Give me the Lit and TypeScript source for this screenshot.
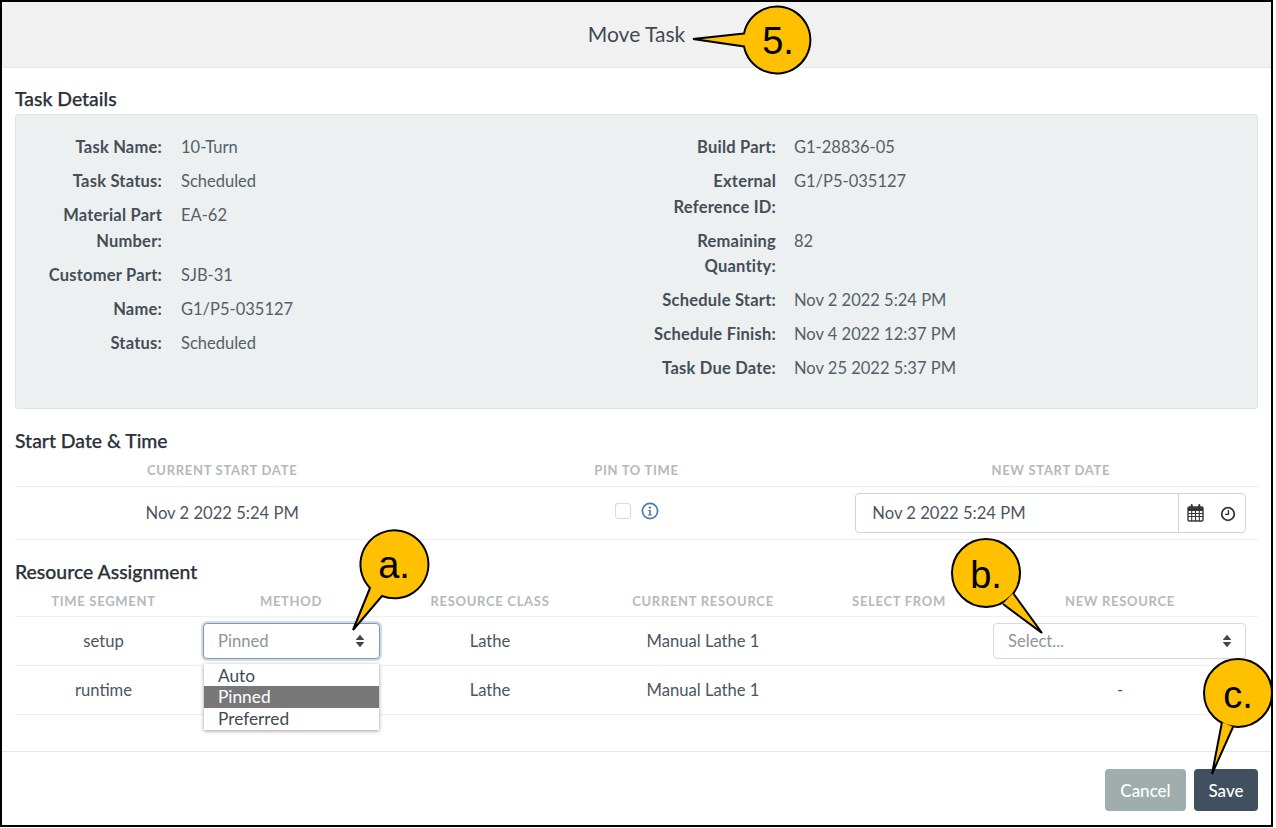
import { LitElement, html, css, svg } from "lit";
import { customElement } from "lit/decorators.js";

const leftRows: [string, string][] = [
  ["Task Name:", "10-Turn"],
  ["Task Status:", "Scheduled"],
  ["Material Part Number:", "EA-62"],
  ["Customer Part:", "SJB-31"],
  ["Name:", "G1/P5-035127"],
  ["Status:", "Scheduled"],
];
const rightRows: [string, string][] = [
  ["Build Part:", "G1-28836-05"],
  ["External Reference ID:", "G1/P5-035127"],
  ["Remaining Quantity:", "82"],
  ["Schedule Start:", "Nov 2 2022 5:24 PM"],
  ["Schedule Finish:", "Nov 4 2022 12:37 PM"],
  ["Task Due Date:", "Nov 25 2022 5:37 PM"],
];

const sortIcon = html`<svg class="sort" width="10" height="14" viewBox="0 0 10 14"><path d="M5 .8 9 5.4Q9.3 6 8.6 6H1.4Q.7 6 1 5.4ZM1.4 8H8.6Q9.3 8 9 8.6L5 13.2 1 8.6Q.7 8 1.4 8Z" fill="#3c4a57"/></svg>`;

const callouts = [
  { d: "M744 33.5 693 39 744 46.5A33.5 33.5 0 1 0 744 33.5Z", x: 778, y: 54, t: "5." },
  { d: "M370 588 353 630 382 596A34 34 0 1 0 370 588Z", x: 394, y: 578, t: "a." },
  { d: "M1013 593 1042 633 1003 604", x: 986, y: 588, t: "b.", circle: [986, 573, 34] },
  { d: "M1222 722 1212 774 1233 727", x: 1238, y: 708, t: "c.", circle: [1238, 693, 34] },
];

@customElement("app-root")
export class AppRoot extends LitElement {
  static styles = css`
    :host { display: block; width: 1276px; height: 828px; background: #fff; position: relative; overflow: hidden;
      font-family: Lato, "Open Sans", sans-serif; font-size: 16.6px; color: #4b5661; }
    .frame { width: 1273px; height: 827px; box-sizing: border-box; border: 2px solid #000; display: flex; flex-direction: column; }
    .head { height: 66px; flex: none; box-sizing: border-box; background: #f1f1f1; border-bottom: 1px solid #e3e5e6;
      display: flex; align-items: center; justify-content: center; font-size: 21px; color: #3f4a54; padding-bottom: 3px; }
    .body { flex: 1; padding: 0 13px; display: flex; flex-direction: column; }
    h3 { margin: 0; font-size: 19.4px; font-weight: 500; line-height: 24px; color: #2a3138; -webkit-text-stroke: .25px #2a3138; }
    .h1 { margin-top: 19px; }
    .h2 { margin-top: 20px; }
    .h3 { margin-top: 20px; }
    .panel { margin-top: 3px; height: 295px; box-sizing: border-box; background: #ecf0f1; border: 1px solid #dfe4e6; border-radius: 3px;
      padding: 20px 0 0; display: grid; grid-template-columns: 614px 1fr; }
    .col { display: flex; flex-direction: column; gap: 8.4px; }
    .col.r { padding-left: 16px; }
    .kv { display: grid; grid-template-columns: 146px 1fr; column-gap: 19px; line-height: 25.6px; font-size: 16.5px; }
    .r .kv { grid-template-columns: 130px 1fr; column-gap: 18px; }
    .k { font-weight: 700; letter-spacing: .22px; text-align: right; color: #454e57; }
    .v { color: #555f68; }
    .th { font-size: 13px; font-weight: 700; letter-spacing: .7px; color: #b5b9bb; text-transform: uppercase; text-align: center;
      box-sizing: border-box; height: 34px; padding-top: 8px; line-height: 18px; border-bottom: 1px solid #ecf0f1; }
    .t3 { display: grid; grid-template-columns: repeat(3, 1fr); }
    .t3 .td { height: 52px; border-bottom: 1px solid #ecf0f1; display: flex; align-items: center; justify-content: center; }
    .chk { width: 14px; height: 14px; border: 1px solid #d4dade; border-radius: 3px; background: #fff; margin: 0 10px 4px 1px; }
    .info { display: block; margin-bottom: 4px; }
    .dt { width: 391px; height: 40px; box-sizing: border-box; border: 1px solid #ced4d8; border-radius: 4px; display: flex; align-items: center; background: #fff; }
    .dt .val { flex: 1; padding-left: 16px; }
    .dt .btns { width: 67px; height: 100%; border-left: 1px solid #ced4d8; display: flex; align-items: center; gap: 16px; padding-left: 8px; box-sizing: border-box; }
    .t6 { display: grid; grid-template-columns: 177px 198px 200px 226px 166px 276px; }
    .t6 .th { height: 33px; }
    .t6 .td { height: 48px; border-bottom: 1px solid #ecf0f1; display: flex; align-items: center; justify-content: center; }
    .sel { box-sizing: border-box; height: 36px; width: 100%; display: flex; align-items: center; justify-content: space-between; border-radius: 4px; background: #fff; color: #8b9699; }
    .sel.focus { margin: 0 10px 0 11px; padding: 0 14px 0 14px; border: 1px solid #7d98b3; box-shadow: 0 0 0 2px #d3dbe3; }
    .sel.idle { margin: 0 12px 0 11px; padding: 0 13px 0 14px; border: 1px solid #d4d9dd; }
    .menucell { position: relative; }
    .menu { position: absolute; left: 12px; top: 47px; width: 175px; padding: 1px 0 1px; font-size: 17.3px; background: #fff; box-shadow: 0 1px 4px rgba(0,0,0,.4); z-index: 2; color: #3f4a56; line-height: 21.3px; }
    .menu div { padding-left: 14px; height: 21.3px; }
    .menu .on { background: #777; color: #fff; }
    .foot { margin-top: 36px; border-top: 1px solid #e3e6e8; flex: 1; display: flex; justify-content: flex-end; align-items: flex-start; gap: 8px; padding: 17px 13px 0 0; }
    .btn { height: 42px; border-radius: 4px; display: flex; align-items: center; justify-content: center; color: #fff; font-size: 17px; font-weight: 500; }
    .cancel { width: 81px; background: #9fadad; }
    .save { width: 64px; background: #40505f; }
    .over { position: absolute; left: 0; top: 0; z-index: 5; pointer-events: none; }
    .over text { font-family: "Liberation Sans", Arial, sans-serif; font-size: 38px; text-anchor: middle; fill: #000; }
  `;

  private kv(rows: [string, string][], cls = "") {
    return html`<div class="col ${cls}">${rows.map(([k, v]) => html`<div class="kv"><div class="k">${k}</div><div class="v">${v}</div></div>`)}</div>`;
  }

  render() {
    return html`
      <div class="frame">
        <div class="head">Move Task</div>
        <div class="body">
          <h3 class="h1">Task Details</h3>
          <div class="panel">${this.kv(leftRows)}${this.kv(rightRows, "r")}</div>

          <h3 class="h2">Start Date &amp; Time</h3>
          <div class="t3">
            <div class="th">Current Start Date</div>
            <div class="th">Pin to Time</div>
            <div class="th">New Start Date</div>
            <div class="td">Nov 2 2022 5:24 PM</div>
            <div class="td">
              <div class="chk"></div>
              <svg class="info" width="18" height="18" viewBox="0 0 18 18" fill="none">
                <circle cx="9" cy="9" r="7.6" stroke="#4f7aa8" stroke-width="1.7"/>
                <circle cx="9" cy="5.6" r="1.2" fill="#4f7aa8"/>
                <path d="M7.2 8h2.6v4.6h1.2v1H7v-1h1.2V9H7.2Z" fill="#4f7aa8"/>
              </svg>
            </div>
            <div class="td">
              <div class="dt">
                <div class="val">Nov 2 2022 5:24 PM</div>
                <div class="btns">
                  <svg width="17" height="18" viewBox="0 0 17 18" fill="none" stroke="#33373c" stroke-width="1.1">
                    <rect x="1" y="3" width="15" height="14" rx="1.2" stroke-width="1.4"/>
                    <path d="M1 6.5h15M1 9.5h15M1 12.5h15M4.7 6.5V17M8.5 6.5V17M12.3 6.5V17"/>
                    <path d="M1 4.8h15" stroke-width="3"/>
                    <path d="M4.7 1v3.4M12.3 1v3.4" stroke-width="2" stroke-linecap="round"/>
                  </svg>
                  <svg width="16" height="16" viewBox="0 0 16 16" fill="none" stroke="#33373c" style="margin-top:2px">
                    <circle cx="8" cy="8" r="6.3" stroke-width="1.8"/>
                    <path d="M8.4 4v4.4H5" stroke-width="1.4"/>
                  </svg>
                </div>
              </div>
            </div>
          </div>

          <h3 class="h3">Resource Assignment</h3>
          <div class="t6">
            <div class="th">Time Segment</div>
            <div class="th">Method</div>
            <div class="th">Resource Class</div>
            <div class="th">Current Resource</div>
            <div class="th">Select From</div>
            <div class="th">New Resource</div>

            <div class="td">setup</div>
            <div class="td menucell">
              <div class="sel focus">Pinned ${sortIcon}</div>
              <div class="menu">
                <div>Auto</div>
                <div class="on">Pinned</div>
                <div>Preferred</div>
              </div>
            </div>
            <div class="td">Lathe</div>
            <div class="td">Manual Lathe 1</div>
            <div class="td"></div>
            <div class="td"><div class="sel idle">Select... ${sortIcon}</div></div>

            <div class="td">runtime</div>
            <div class="td"></div>
            <div class="td">Lathe</div>
            <div class="td">Manual Lathe 1</div>
            <div class="td"></div>
            <div class="td">-</div>
          </div>
        </div>
        <div class="foot">
          <div class="btn cancel">Cancel</div>
          <div class="btn save">Save</div>
        </div>
      </div>
      <svg class="over" width="1276" height="828" viewBox="0 0 1276 828">
        ${callouts.map((c) => svg`
          ${c.circle
            ? svg`<circle cx=${c.circle[0]} cy=${c.circle[1]} r=${c.circle[2]} fill="#ffc000" stroke="#000" stroke-width="2"/>
                  <path d=${c.d} fill="#ffc000" stroke="#000" stroke-width="2" stroke-linejoin="miter"/>`
            : svg`<path d=${c.d} fill="#ffc000" stroke="#000" stroke-width="2"/>`}
          <text x=${c.x} y=${c.y}>${c.t}</text>
        `)}
      </svg>
    `;
  }
}
